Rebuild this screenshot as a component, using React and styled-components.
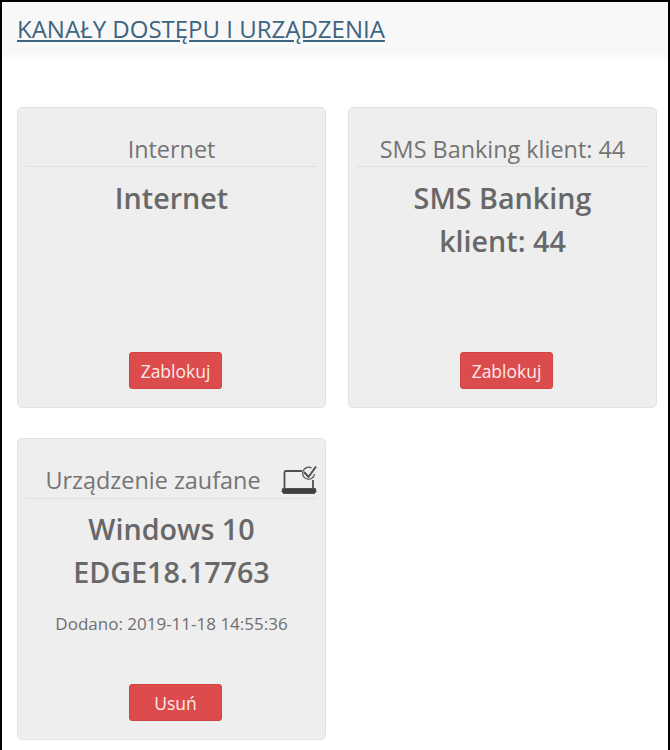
import React from "react";
import styled, { createGlobalStyle } from "styled-components";

const GlobalStyle = createGlobalStyle`
    html, body {
        margin: 0;
        padding: 0;
        background: #fff;
    }
    * {
        box-sizing: border-box;
    }
`

const Frame = styled.main`
    width: 670px;
    height: 750px;
    overflow: hidden;
    background: #fff;
    border-style: solid;
    border-color: #000;
    border-width: 2px 2px 0 2px;
    font-family: "Open Sans", "Noto Sans", sans-serif;
`

const Header = styled.header`
    height: 58px;
    padding: 11px 15px 0;
    background: linear-gradient(#f8f8f8 85%, #fdfdfd);
`

const Title = styled.a`
    font-size: 24px;
    line-height: 32px;
    color: #3d6480;
    text-decoration: underline;
`

const Grid = styled.section`
    display: grid;
    grid-template-columns: 309px 309px;
    grid-template-rows: 301px 302px;
    gap: 30px 22px;
    padding: 47px 0 0 15px;
`

const Card = styled.article`
    display: flex;
    flex-direction: column;
    align-items: center;
    padding: 24px 8px 18px;
    background: #eeeeee;
    border: 1px solid #e2e2e2;
    border-radius: 5px;
`

const CardHeading = styled.div`
    position: relative;
    width: 100%;
    height: ${(props) => (props.$withIcon ? "36px" : "35px")};
    padding-right: ${(props) => (props.$withIcon ? "37px" : "0")};
    border-bottom: 1px solid #e0e0e0;
    font-size: 23.4px;
    line-height: 35px;
    color: #747474;
    text-align: center;
    white-space: nowrap;
`

const DeviceIcon = styled.svg`
    position: absolute;
    right: 0;
    top: 2px;
    width: 36px;
    height: 30px;
`

const CardName = styled.h2`
    margin: ${(props) => (props.$withIcon ? "8px" : "9px")} 0 0;
    font-size: 28.700px;
    line-height: 43px;
    font-weight: 600;
    color: #686868;
    text-align: center;
`

const AddedDate = styled.p`
    margin: 18px 0 0;
    font-size: 17px;
    line-height: 26px;
    color: #6f6f6f;
`

const ActionButton = styled.button`
    width: 93px;
    height: 37px;
    margin: auto 0 0 8px;
    padding: 0;
    background: #dc4c4c;
    border: 1px solid #d24444;
    border-radius: 3px;
    font-family: inherit;
    font-size: 17.500px;
    color: #fbeaea;
`

const channels = [
    { heading: "Internet", name: ["Internet"], action: "Zablokuj" },
    { heading: "SMS Banking klient: 44", name: ["SMS Banking", "klient: 44"], action: "Zablokuj" },
    {
        heading: "Urządzenie zaufane",
        name: ["Windows 10", "EDGE18.17763"],
        added: "Dodano: 2019-11-18 14:55:36",
        action: "Usuń",
        trusted: true,
    },
]

const TrustedDeviceIcon = () => (
    <DeviceIcon viewBox="0 0 36 30" fill="none" stroke="#4f4f4f">
        <path d="M21 6H5A1.500 1.500 0 0 0 3.500 7.500V23M32 15V23" strokeWidth="1.800" />
        <path d="M1.500 23.500H34.500L35 26.500L33.500 28.500H2.500L1 26.500Z" fill="#3f3f3f" strokeWidth="1" />
        <path d="M23 7l4.500 5 7.500-10.500" strokeWidth="2" />
        <path d="M33.500 9a6 6 0 1 1-3-6" strokeWidth="1.200" />
    </DeviceIcon>
)

const App = () => {
    return (
        <Frame>
            <GlobalStyle />
            <Header>
                <Title href="#">KANAŁY DOSTĘPU I URZĄDZENIA</Title>
            </Header>
            <Grid>
                {channels.map((channel) => (
                    <Card key={channel.heading}>
                        <CardHeading $withIcon={channel.trusted}>
                            {channel.heading}
                            {channel.trusted && <TrustedDeviceIcon />}
                        </CardHeading>
                        <CardName $withIcon={channel.trusted}>
                            {channel.name.map((line) => (
                                <div key={line}>{line}</div>
                            ))}
                        </CardName>
                        {channel.added && <AddedDate>{channel.added}</AddedDate>}
                        <ActionButton>{channel.action}</ActionButton>
                    </Card>
                ))}
            </Grid>
        </Frame>
    )
}

export default App
